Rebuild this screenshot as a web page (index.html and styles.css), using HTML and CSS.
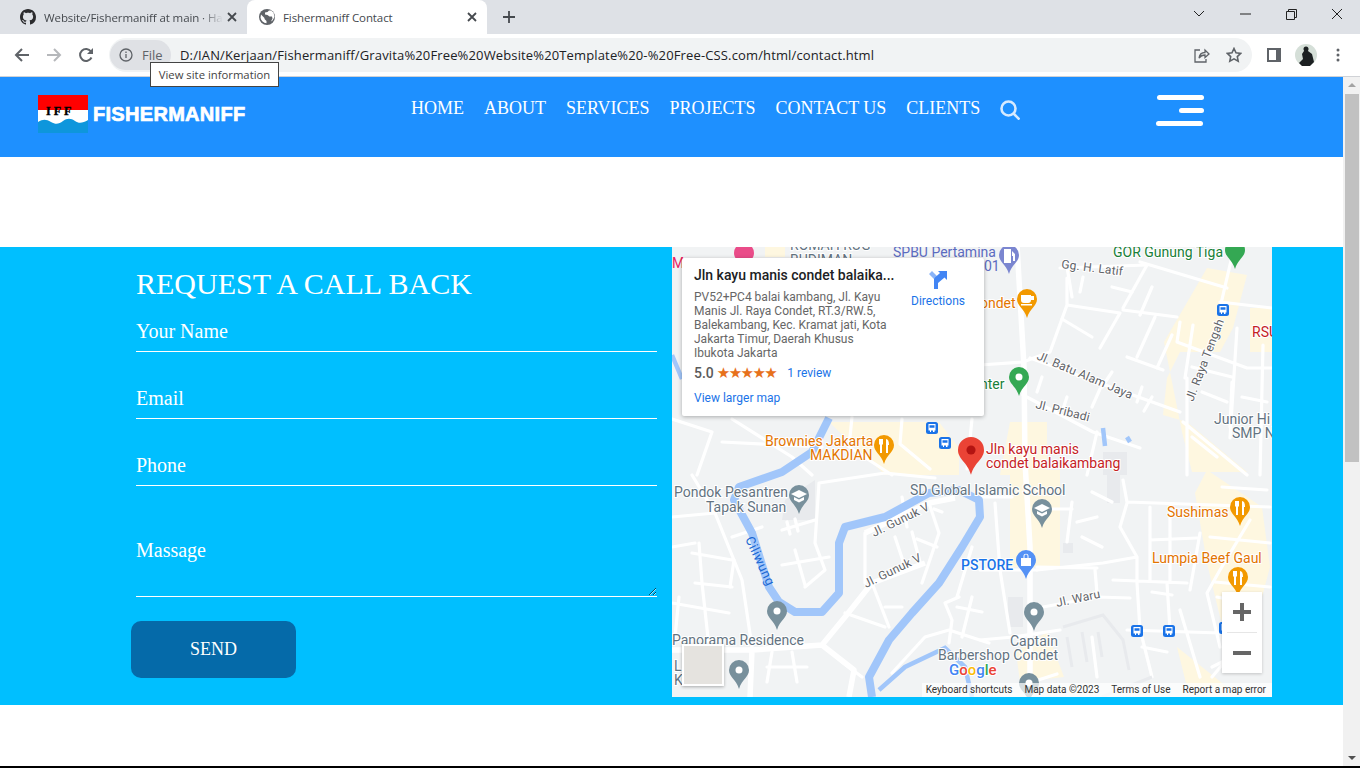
FILE: index.html
```html
<!DOCTYPE html>
<html lang="en">
<head>
    <meta charset="UTF-8">
    <meta name="viewport" content="width=device-width, initial-scale=1.0">
    <title>Fishermaniff Contact</title>
    <link rel="stylesheet" href="styles.css">
</head>
<body>
<div class="window">
    <!-- browser chrome -->
    <div class="tabstrip">
        <div class="tab">
            <svg class="tab-icon" viewBox="0 0 16 16"><path class="fill-dark" d="M8 0C3.58 0 0 3.58 0 8c0 3.54 2.29 6.53 5.47 7.59.4.07.55-.17.55-.38 0-.19-.01-.82-.01-1.49-2.01.37-2.53-.49-2.69-.94-.09-.23-.48-.94-.82-1.13-.28-.15-.68-.52-.01-.53.63-.01 1.08.58 1.23.82.72 1.21 1.87.87 2.33.66.07-.52.28-.87.51-1.07-1.78-.2-3.64-.89-3.64-3.95 0-.87.31-1.59.82-2.15-.08-.2-.36-1.02.08-2.12 0 0 .67-.21 2.2.82.64-.18 1.32-.27 2-.27.68 0 1.36.09 2 .27 1.53-1.04 2.2-.82 2.2-.82.44 1.1.16 1.92.08 2.12.51.56.82 1.27.82 2.15 0 3.07-1.87 3.75-3.65 3.95.29.25.54.73.54 1.48 0 1.07-.01 1.93-.01 2.2 0 .21.15.46.55.38A8.013 8.013 0 0016 8c0-4.42-3.58-8-8-8z"/></svg>
            <span class="tab-title tab-title-fade">Website/Fishermaniff at main · Ha</span>
            <svg class="tab-close" viewBox="0 0 10 10"><path class="line-dark" d="M1 1l8 8M9 1l-8 8"/></svg>
        </div>
        <div class="tab tab-active">
            <svg class="tab-icon" viewBox="0 0 16 16"><circle class="fill-gray" cx="8" cy="8" r="8"/><path class="fill-white" d="M2 5.500l3.500 3.500v1l2 2v2.300C4.500 14 2 11.500 1.500 8.500zM10 1.500l-1.500 1.500-2.500.500 0 2 2.500.500 2 1.500 2.500 0 .500 2-1.500 3 1.500-1 2-3.500-1-4.500-2.500-2z"/></svg>
            <span class="tab-title">Fishermaniff Contact</span>
            <svg class="tab-close" viewBox="0 0 10 10"><path class="line-dark" d="M1 1l8 8M9 1l-8 8"/></svg>
        </div>
        <svg class="new-tab" viewBox="0 0 12 12"><path class="line-dark" d="M6 0v12M0 6h12"/></svg>
        <div class="window-controls">
            <div class="window-btn"><svg width="12" height="8" viewBox="0 0 12 8"><path class="line-thin" d="M1 1l5 5 5-5"/></svg></div>
            <div class="window-btn"><svg width="11" height="2" viewBox="0 0 11 2"><path class="line-thin" d="M0 1h11"/></svg></div>
            <div class="window-btn"><svg width="11" height="11" viewBox="0 0 11 11"><path class="line-thin" d="M.5 2.500h8v8h-8zM2.500 2.500v-2h8v8h-2"/></svg></div>
            <div class="window-btn"><svg width="12" height="12" viewBox="0 0 12 12"><path class="line-thin" d="M1 1l10 10M11 1L1 11"/></svg></div>
        </div>
    </div>
    <div class="toolbar">
        <div class="tool-btn"><svg width="16" height="16" viewBox="0 0 16 16"><path class="line-icon" d="M15 8H2M8 2L2 8l6 6"/></svg></div>
        <div class="tool-btn"><svg width="16" height="16" viewBox="0 0 16 16"><path class="line-icon line-off" d="M1 8h13M8 2l6 6-6 6"/></svg></div>
        <div class="tool-btn"><svg width="16" height="16" viewBox="0 0 16 16"><path class="line-icon" d="M13.500 10.500A6 6 0 1 1 13 4.500"/><path class="fill-gray" d="M15 1v6H9z"/></svg></div>
        <div class="omnibox">
            <div class="site-chip">
                <svg width="14" height="14" viewBox="0 0 14 14"><circle class="line-chip" cx="7" cy="7" r="6"/><path class="line-chip" d="M7 6v4M7 3.500v1.500"/></svg>
                <span>File</span>
            </div>
            <span class="url">D:/IAN/Kerjaan/Fishermaniff/Gravita%20Free%20Website%20Template%20-%20Free-CSS.com/html/contact.html</span>
            <svg class="omni-icon share-icon" width="16" height="16" viewBox="0 0 16 16"><path class="line-chip" d="M5 11c.5-3.500 3-5.500 6-5.500V3l4 4-4 3.500V8C8.500 8 6.500 9 5 11zM6 3H1v12h11v-3"/></svg>
            <svg class="omni-icon" width="16" height="16" viewBox="0 0 16 16"><path class="line-star" d="M8 1.500l2 4.300 4.700.6-3.400 3.200.9 4.600L8 11.900l-4.200 2.300.9-4.600L1.300 6.400 6 5.800z"/></svg>
        </div>
        <div class="tool-group">
            <div class="tool-btn"><svg width="14" height="14" viewBox="0 0 14 14"><path class="fill-gray" d="M0 0h14v14H0zM2 2v10h7V2z"/></svg></div>
            <div class="tool-btn"><svg width="22" height="22" viewBox="0 0 22 22"><circle class="avatar-bg" cx="11" cy="11" r="11"/><circle class="avatar-fig" cx="11" cy="5" r="2.500"/><path class="avatar-fig" d="M9 7h4l4 3 2 8-4 4H7l-3-3 4-4-1-5z"/></svg></div>
            <div class="tool-btn"><svg width="4" height="14" viewBox="0 0 4 14"><circle class="fill-gray" cx="2" cy="2" r="1.500"/><circle class="fill-gray" cx="2" cy="7" r="1.500"/><circle class="fill-gray" cx="2" cy="12" r="1.500"/></svg></div>
        </div>
        <div class="tooltip">View site information</div>
    </div>

    <div class="viewport">
        <div class="page">
            <header class="site-header">
                <div class="brand">
                    <svg class="brand-logo" viewBox="0 0 50 38">
                        <rect class="logo-white" width="50" height="38"/>
                        <rect class="logo-red" width="50" height="15"/>
                        <path class="logo-blue" d="M0 27c5-3 8-3 13 0s8 2 12-1 8-3 12 0 8 2 13-1v13H0z"/>
                        <text class="logo-text" x="8" y="20">IFF</text>
                    </svg>
                    <span class="brand-name">FISHERMANIFF</span>
                </div>
                <nav class="main-nav">
                    <a>HOME</a>
                    <a>ABOUT</a>
                    <a>SERVICES</a>
                    <a>PROJECTS</a>
                    <a>CONTACT US</a>
                    <a>CLIENTS</a>
                </nav>
                <svg class="search-icon" viewBox="0 0 20 20"><circle class="line-search" cx="8.500" cy="8.500" r="7"/><path class="line-search" d="M13.500 13.500L19.500 19.500"/></svg>
                <div class="menu-toggle">
                    <span class="bar bar-top"></span>
                    <span class="bar bar-mid"></span>
                    <span class="bar bar-bot"></span>
                </div>
            </header>

            <section class="contact">
                <form class="contact-form">
                    <h2>REQUEST A CALL BACK</h2>
                    <input type="text" placeholder="Your Name">
                    <input type="text" placeholder="Email">
                    <input type="text" placeholder="Phone">
                    <textarea placeholder="Massage"></textarea>
                    <button type="button">SEND</button>
                </form>

                <div class="map">
                    <svg class="map-canvas" viewBox="0 0 600 450">
                        <defs>
                            <path id="pin" d="M0 0a10 10 0 0 1 10 10c0 7-7 9-10 19-3-10-10-12-10-19A10 10 0 0 1 0 0z"/>
                            <circle id="g-dot" class="glyph" cx="0" cy="10" r="3.500"/>
                            <path id="g-food" class="glyph" d="M-5 4h4v5l-1 1v8h-2v-8l-1-1zM2 4c2 0 3 2 3 6H4v8H2z"/>
                            <path id="g-edu" class="glyph" d="M0 5l8 4-8 4-8-4zM-5 12l5 2.500 5-2.500v3l-5 2.500-5-2.500z"/>
                            <path id="g-cup" class="glyph" d="M-6 6h10v5c0 2-1 3-3 3h-4c-2 0-3-1-3-3zM4 7h3v4H4zM-6 15H5v1.500H-6z"/>
                            <path id="g-bag" class="glyph" d="M-5 8h10v8H-5zM-2.500 8V6c0-3 5-3 5 0v2h-1V6c0-2-3-2-3 0v2z"/>
                            <path id="g-pump" class="glyph" d="M-5 4h7v14h-7zM3 6l3 3v7H4v-5H3z"/>
                            <g id="bus">
                                <rect x="-6" y="-6" width="12" height="12" rx="2.500" class="bus-bg"/>
                                <path class="glyph" d="M-3.500-4h7v6.500h-1V4h-1.500V2.500h-2V4H-2V2.500h-1.500zM-2.500-2.800v2.500h5v-2.500z"/>
                            </g>
                        </defs>

                        <rect class="map-land" width="600" height="450"/>

                        <g class="map-beige">
                            <path d="M535 21l40 7-14 53-13 24h-40l-13 26-4 37 24 7 60 50h-55l-10-40-18-90z"/>
                            <path d="M578 61h22v44h-22zM338 223h50v97h-50zM338 175h37v53h-47zM157 175h110l20 26v27h-74zM535 223l55 37 8 60-8 30-30 50-12-30-13-54-12-70zM375 385l17 45-44 5-4-30zM505 400l50 40h-40zM93 0h20v10H93z"/>
                        </g>
                        <g class="map-building">
                            <path d="M435 223h13v33h-13zM391 296h10v10h-10zM336 350h15v30h-15zM431 205h24v23h-24zM113 253l30-20v40h-33z"/>
                        </g>

                        <g class="map-road">
                            <path d="M395 31v27l-17 47-27 10M395 58l53 8-20 35M468 15l87 26M475 18l-24 43M451 63l54 7M483 70l-18 40M455 110l36 13M500 88l-15 33"/>
                            <path d="M561 5l-13 56M548 55l52 6M508 75l-3 20 70 26h25M358 111l150 54M515 131v97M521 78l-8 53M511 175l64 53M565 81l-7 110M591 98l-3 130"/>
                            <path d="M351 148l70 37 47 16M425 185l-10 43M308 118l43-3M388 21l87-3M400 50l-5-30M408 45l3-15M480 40l-12 28"/>
                            <path d="M0 172l40 13-15 43M180 170l-3 30 43 28M50 195l100 5M60 172l60 38 20 18M230 172l-2 25 30 25M300 172l-5 50"/>
                            <path d="M43 266l27 67 10 67M0 356l57 10M20 306l40 7M23 336l37 4M27 296l3 40 7 64M7 350l-4 40M20 228l23 38M0 270l43-4"/>
                            <path d="M147 236l-4 60 10 27-20 17M123 303l10 35M110 318l47-8M147 236l66-10 50 5M110 283l33-10M115 275l3 12M123 272l3 12"/>
                            <path d="M200 336l17 44M173 366l40 14M213 360h17M287 350l-14 6 7 17-3 23M220 426l33-36 24-7 40 13M257 256l10 30-17 50M193 286v50"/>
                            <path d="M451 233l4 22 143 5M455 256l-7 24 17 30-34 6-66 7M465 310v26l3 47M495 336l3 47M441 333l74 3M478 260v73M498 263v70M478 293l47-2M528 286l-10 57"/>
                            <path d="M455 383l93 3M508 363l20 67M538 290l60 6M578 273l-30 50-13 23 13 54M371 360l54-10 33 1M308 393l33-3 47-7M323 256l5 67 10 63M365 320l60 1M423 323l2 23"/>
                            <path d="M543 335l55 5M400 262h-20M410 290l20 10M440 255l-20-10M550 240l45 3M480 430l-10-40M540 420l30-15"/>
                            <path d="M308 323h57M300 250h40M300 300l-15 50"/>
                            <path d="M0 300l23-4M60 290l30-10M62 313l-4 27M85 300l10 35M100 405l-5 30M120 405l5 30M95 420h40M190 430l-20-15M230 250l5 30M240 262l-20 10"/>
                            <path d="M223 290l10 30M240 285l8 30M262 262l8 3M265 300l-20-8M300 350l-10 40M310 365l-25-5M520 120l40 10M530 145l25 10M570 150l25 5M520 190l25 20M560 135l-2 45"/>
                            <path d="M440 40l20 5M420 90l-30-18M440 125l-10 15M470 140l-5 15M370 130l-5 15M395 150l-4 12M420 160l8-18M480 150l-8 14"/>
                            <path d="M400 255l-5 40M425 270l-20 5M545 350l25 5M480 345l20 3M420 390l5 40M470 400l25 5M360 435l25-8M565 400l-25 30"/>
                        </g>
                        <path class="map-main-road" d="M345-2l7 122 1 95 5 85v150"/>
                        <path class="map-main-road" d="M0 403h80l70-5 23-28 27-34 53-20M150 398l32 25-5 27M80 403l-2 47M193 286l64-30 26-5"/>

                        <g class="map-faint">
                            <path d="M391 380l40-12 20 25 6 30M400 420l-5-30M415 415l-5-30M430 410l-4-25"/>
                            <path d="M430 450l50-20"/>
                        </g>

                        <path class="map-river" d="M157 171l-17 34-30 20-43 15-5 13 18 33 17 54 10 15 16 10h27l17-19v-50l6-16 40-10 44-24 30-3 20 10 1 17-18 30-23 36-27 30-23 27-20 37 3 20"/>
                        <path class="map-river-thin" d="M0 108l10 24M207 443l26-23 40-19 20 19 7 30"/>
                        <path class="map-river-thin" d="M431 181l2 18M455 190l3 5"/>

                        <g class="label-gray">
                            <text x="2" y="250">Pondok Pesantren</text>
                            <text x="34" y="265">Tapak Sunan</text>
                            <text x="0" y="398">Panorama Residence</text>
                            <text x="238" y="248">SD Global Islamic School</text>
                            <text x="542" y="177">Junior Hi</text>
                            <text x="560" y="191">SMP N</text>
                            <text x="338" y="399">Captain</text>
                            <text x="266" y="413">Barbershop Condet</text>
                            <text x="2" y="424">L</text>
                            <text x="2" y="438">K</text>
                            <text x="118" y="3">ROMAH RUG</text>
                            <text x="118" y="18">BUDIMAN</text>
                        </g>
                        <g class="label-orange">
                            <text x="93" y="199">Brownies Jakarta</text>
                            <text x="138" y="213">MAKDIAN</text>
                            <text x="495" y="270">Sushimas</text>
                            <text x="480" y="316">Lumpia Beef Gaul</text>
                            <text x="308" y="61">ondet</text>
                        </g>
                        <text class="label-green" x="308" y="142">nter</text>
                        <text class="label-green" x="441" y="10">GOR Gunung Tiga</text>
                        <text class="label-purple" x="221" y="10">SPBU Pertamina</text>
                        <text class="label-purple" x="312" y="24">01</text>
                        <text class="label-pink" x="0" y="21">M</text>
                        <g class="label-red">
                            <text x="314" y="207">Jln kayu manis</text>
                            <text x="314" y="221">condet balaikambang</text>
                            <text x="580" y="90">RSU</text>
                        </g>
                        <text class="label-blue" x="289" y="323">PSTORE</text>

                        <g class="label-road">
                            <text transform="translate(364 112) rotate(23)">Jl. Batu Alam Jaya</text>
                            <text transform="translate(521 155) rotate(-69)">Jl. Raya Tengah</text>
                            <text transform="translate(363 161) rotate(14)">Jl. Pribadi</text>
                            <text transform="translate(389 21) rotate(7)">Gg. H. Latif</text>
                            <text transform="translate(202 290) rotate(-26)">Jl. Gunuk V</text>
                            <text transform="translate(194 341) rotate(-26)">Jl. Gunuk V</text>
                            <text transform="translate(385 360) rotate(-12)">Jl. Waru</text>
                        </g>
                        <text class="label-river" transform="translate(73 292) rotate(65)">Ciliwung</text>

                        <g transform="translate(72 -4)" class="pin-pink"><use href="#pin"/></g>
                        <g transform="translate(337 -2)" class="pin-purple"><use href="#pin"/><use href="#g-pump"/></g>
                        <g transform="translate(563 -7)" class="pin-green"><use href="#pin"/></g>
                        <g transform="translate(355 42)" class="pin-orange"><use href="#pin"/><use href="#g-cup"/></g>
                        <g transform="translate(347 120)" class="pin-green"><use href="#pin"/><use href="#g-dot"/></g>
                        <g transform="translate(212 188)" class="pin-orange"><use href="#pin"/><use href="#g-food"/></g>
                        <g transform="translate(127 238)" class="pin-gray"><use href="#pin"/><use href="#g-edu"/></g>
                        <g transform="translate(105 354)" class="pin-gray"><use href="#pin"/><use href="#g-dot"/></g>
                        <g transform="translate(67 413)" class="pin-gray"><use href="#pin"/><use href="#g-dot"/></g>
                        <g transform="translate(370 252)" class="pin-gray"><use href="#pin"/><use href="#g-edu"/></g>
                        <g transform="translate(568 250)" class="pin-orange"><use href="#pin"/><use href="#g-food"/></g>
                        <g transform="translate(566 320)" class="pin-orange"><use href="#pin"/><use href="#g-food"/></g>
                        <g transform="translate(354 303)" class="pin-blue"><use href="#pin"/><use href="#g-bag"/></g>
                        <g transform="translate(362 355)" class="pin-gray"><use href="#pin"/><use href="#g-dot"/></g>
                        <g transform="translate(357 426)" class="pin-gray"><use href="#pin"/><use href="#g-dot"/></g>

                        <use href="#bus" x="551" y="63"/>
                        <use href="#bus" x="260" y="181"/>
                        <use href="#bus" x="273" y="196"/>
                        <use href="#bus" x="465" y="384"/>
                        <use href="#bus" x="497" y="384"/>
                        <use href="#bus" x="553" y="381"/>

                        <g transform="translate(299 190) scale(1.300)" class="pin-red"><use href="#pin"/><circle class="pin-red-dot" cx="0" cy="10" r="3.500"/></g>

                        <text class="google-logo" x="277" y="428"><tspan class="g-blue">G</tspan><tspan class="g-red">o</tspan><tspan class="g-yellow">o</tspan><tspan class="g-blue">g</tspan><tspan class="g-green">l</tspan><tspan class="g-red">e</tspan></text>
                    </svg>

                    <div class="place-card">
                        <div class="place-info">
                            <div class="place-title">Jln kayu manis condet balaika...</div>
                            <div class="place-address">PV52+PC4 balai kambang, Jl. Kayu Manis Jl. Raya Condet, RT.3/RW.5, Balekambang, Kec. Kramat jati, Kota Jakarta Timur, Daerah Khusus Ibukota Jakarta</div>
                            <div class="place-rating">
                                <span class="rating-num">5.0</span>
                                <span class="rating-stars">★★★★★</span>
                                <a class="rating-link">1 review</a>
                            </div>
                            <a class="larger-map">View larger map</a>
                        </div>
                        <div class="place-directions">
                            <svg width="18" height="18" viewBox="0 0 18 18">
                                <path class="dir-light" d="M0 3l3-3 6 6v12H5V8z"/>
                                <path class="dir-dark" d="M5 18V9c0-1 .5-2 1-2.500L11 2 9 0h9v9l-2.500-2.500L9 12v6z"/>
                            </svg>
                            <a>Directions</a>
                        </div>
                    </div>

                    <div class="map-type"></div>

                    <div class="zoom-control">
                        <div class="zoom-btn"><svg width="18" height="18" viewBox="0 0 18 18"><path class="fill-zoom" d="M7 0h4v7h7v4h-7v7H7v-7H0V7h7z"/></svg></div>
                        <div class="zoom-divider"></div>
                        <div class="zoom-btn"><svg width="18" height="4" viewBox="0 0 18 4"><path class="fill-zoom" d="M0 0h18v4H0z"/></svg></div>
                    </div>

                    <div class="map-footer">
                        <span>Keyboard shortcuts</span>
                        <span>Map data ©2023</span>
                        <span>Terms of Use</span>
                        <span>Report a map error</span>
                    </div>
                </div>
            </section>
        </div>

        <div class="scrollbar">
            <div class="scroll-arrow scroll-up"></div>
            <div class="scroll-thumb"></div>
            <div class="scroll-arrow scroll-down"></div>
        </div>
    </div>
</div>
</body>
</html>
```

FILE: styles.css
```css
* {
    box-sizing: border-box;
}
body {
    margin: 0;
    padding: 0;
    background-color: #fff;
    font-family: 'Open Sans', 'Noto Sans', sans-serif;
    overflow: hidden;
}
.window {
    width: 1360px;
    height: 768px;
    display: flex;
    flex-direction: column;
}

/* browser chrome */
.tabstrip {
    height: 34px;
    background-color: #dee1e6;
    display: flex;
    align-items: stretch;
    padding-left: 8px;
}
.tab {
    width: 239px;
    display: flex;
    align-items: center;
    padding: 0 10px 0 12px;
}
.tab-active {
    width: 240px;
    background-color: #fff;
    border-radius: 8px 8px 0 0;
}
.tab-icon {
    width: 16px;
    height: 16px;
    flex: none;
    margin-right: 8px;
}
.tab-title {
    font-size: 11.500px;
    letter-spacing: -0.100px;
    color: #45494e;
    flex: 1;
    white-space: nowrap;
}
.tab-title-fade {
    -webkit-mask-image: linear-gradient(to right, #000 88%, transparent 100%);
    mask-image: linear-gradient(to right, #000 88%, transparent 100%);
}
.tab-close {
    width: 10px;
    height: 10px;
    flex: none;
    margin-left: 4px;
}
.new-tab {
    width: 12px;
    height: 12px;
    align-self: center;
    margin-left: 16px;
}
.window-controls {
    margin-left: auto;
    display: flex;
    height: 28px;
}
.window-btn {
    width: 46px;
    display: flex;
    align-items: center;
    justify-content: center;
}
.line-dark {
    stroke: #45494e;
    stroke-width: 1.800;
    fill: none;
}
.line-thin {
    stroke: #222;
    stroke-width: 1;
    fill: none;
}
.fill-dark {
    fill: #2b2b2e;
}
.fill-gray {
    fill: #5f6368;
}
.fill-white {
    fill: #fff;
}
.toolbar {
    height: 43px;
    background-color: #fff;
    border-bottom: 1px solid #d0d2d6;
    display: flex;
    align-items: center;
    padding: 0 6px 0 6px;
    position: relative;
}
.tool-btn {
    width: 32px;
    height: 32px;
    display: flex;
    align-items: center;
    justify-content: center;
}
.line-icon {
    stroke: #5f6368;
    stroke-width: 2;
    fill: none;
}
.line-off {
    stroke: #b6b8bb;
}
.line-chip {
    stroke: #5f6368;
    stroke-width: 1.300;
    fill: none;
}
.line-star {
    stroke: #5f6368;
    stroke-width: 1.600;
    fill: none;
}
.omnibox {
    margin-left: 7px;
    width: 1143px;
    height: 34px;
    border-radius: 17px;
    background-color: #f1f3f4;
    display: flex;
    align-items: center;
    padding-left: 1px;
}
.site-chip {
    width: 61px;
    height: 30px;
    border-radius: 15px;
    background-color: #dfe1e5;
    display: flex;
    align-items: center;
    padding-left: 9px;
    gap: 9px;
    font-size: 13px;
    color: #5f6368;
}
.url {
    margin-left: 9px;
    font-size: 13px;
    letter-spacing: 0.140px;
    color: #202124;
    white-space: nowrap;
}
.omni-icon {
    flex: none;
    margin-left: 16px;
}
.share-icon {
    margin-left: auto;
}
.omni-icon:last-child {
    margin-right: 10px;
}
.tool-group {
    display: flex;
    margin-left: 6px;
}
.avatar-bg {
    fill: #d5dfd8;
}
.avatar-fig {
    fill: #1c2022;
}
.tooltip {
    position: absolute;
    left: 150px;
    top: 28px;
    width: 129px;
    height: 25px;
    background-color: #fff;
    border: 1px solid #444;
    font-size: 11.300px;
    color: #444;
    display: flex;
    align-items: center;
    justify-content: center;
    z-index: 5;
}

/* page */
.viewport {
    height: 691px;
    display: flex;
    border-bottom: 2px solid #000;
    overflow: hidden;
}
.page {
    width: 1343px;
    background-color: #fff;
    font-family: 'Liberation Serif', serif;
}
.site-header {
    height: 80px;
    background-color: #1e90ff;
    display: flex;
    align-items: flex-start;
    padding: 18px 139px 0 38px;
}
.brand {
    width: 373px;
    display: flex;
    align-items: center;
    gap: 5px;
}
.brand-logo {
    width: 50px;
    height: 38px;
    flex: none;
}
.logo-white {
    fill: #fff;
}
.logo-red {
    fill: #f00;
}
.logo-blue {
    fill: #0e96dc;
}
.logo-text {
    font-family: 'Liberation Serif', serif;
    font-weight: bold;
    font-size: 12px;
    letter-spacing: 3px;
    fill: #000;
    stroke: #000;
    stroke-width: 0.400px;
}
.brand-name {
    font-family: 'Liberation Sans', sans-serif;
    font-weight: bold;
    font-size: 20px;
    letter-spacing: 0.300px;
    color: #fff;
    -webkit-text-stroke: 0.700px #fff;
}
.main-nav {
    display: flex;
    gap: 20px;
    margin-top: 3px;
}
.main-nav a {
    font-size: 18px;
    color: #fff;
}
.search-icon {
    width: 20px;
    height: 20px;
    margin: 5px 0 0 20px;
}
.line-search {
    stroke: #d6eaff;
    stroke-width: 2.600;
    fill: none;
}
.menu-toggle {
    margin-left: auto;
    width: 48px;
    display: flex;
    flex-direction: column;
    align-items: flex-end;
    gap: 8px;
}
.bar {
    display: block;
    height: 5px;
    background-color: #fff;
    border-radius: 3px;
}
.bar-top {
    width: 47px;
}
.bar-mid {
    width: 25px;
}
.bar-bot {
    width: 47px;
    margin-right: 1px;
}

/* contact section */
.contact {
    margin-top: 90px;
    height: 458px;
    background-color: #00bfff;
    display: flex;
    align-items: flex-start;
}
.contact-form {
    width: 657px;
    padding: 20px 0 0 136px;
    display: flex;
    flex-direction: column;
    align-items: flex-start;
}
.contact-form h2 {
    margin: 0 0 11px;
    font-size: 30px;
    font-weight: normal;
    color: #fff;
}
.contact-form input,
.contact-form textarea {
    display: block;
    width: 521px;
    padding: 0;
    border: none;
    border-bottom: 1px solid #fff;
    border-radius: 0;
    background: transparent;
    font-family: 'Liberation Serif', serif;
    font-size: 20px;
    color: #fff;
    outline: none;
}
.contact-form input {
    height: 40px;
    margin-bottom: 27px;
}
.contact-form textarea {
    height: 58px;
    margin-top: 26px;
}
.contact-form input::placeholder,
.contact-form textarea::placeholder {
    color: #fff;
    opacity: 1;
}
.contact-form button {
    width: 165px;
    height: 57px;
    margin: 24px 0 0 -5px;
    border: none;
    border-radius: 10px;
    background-color: #056aa9;
    color: #fff;
    font-family: 'Liberation Serif', serif;
    font-size: 18px;
}

/* map */
.map {
    margin-left: 15px;
    width: 600px;
    height: 450px;
    position: relative;
    overflow: hidden;
    font-family: 'Roboto', sans-serif;
}
.map-canvas {
    display: block;
    width: 600px;
    height: 450px;
}
.map-canvas text {
    font-family: 'Roboto', sans-serif;
    font-size: 14px;
}
.map-land {
    fill: #f1f3f4;
}
.map-beige {
    fill: #fef7e0;
}
.map-building {
    fill: #e8eaed;
}
.map-road {
    fill: none;
    stroke: #fff;
    stroke-width: 3.200;
    stroke-linecap: round;
    stroke-linejoin: round;
}
.map-main-road {
    fill: none;
    stroke: #fff;
    stroke-width: 5.500;
    stroke-linejoin: round;
}
.map-faint {
    fill: none;
    stroke: #e8eaed;
    stroke-width: 3;
}
.map-river {
    fill: none;
    stroke: #a1c6fa;
    stroke-width: 8;
    stroke-linejoin: round;
}
.map-river-thin {
    fill: none;
    stroke: #a1c6fa;
    stroke-width: 4.500;
}
.label-gray text,
text.label-gray {
    fill: #637381;
    paint-order: stroke;
    stroke: #fff;
    stroke-width: 2px;
}
.label-orange text {
    fill: #e37400;
    paint-order: stroke;
    stroke: #fff;
    stroke-width: 2px;
}
.label-green {
    fill: #188038;
    paint-order: stroke;
    stroke: #fff;
    stroke-width: 2px;
}
.label-purple {
    fill: #5c6bc0;
}
.label-pink {
    fill: #e91e63;
}
.label-red text {
    fill: #c5221f;
    paint-order: stroke;
    stroke: #fff;
    stroke-width: 2px;
}
.map-canvas .label-blue {
    fill: #1a73e8;
    font-weight: 500;
    paint-order: stroke;
    stroke: #fff;
    stroke-width: 2px;
}
.map-canvas .label-road text {
    font-size: 12px;
    letter-spacing: 0.200px;
    fill: #5f6368;
    paint-order: stroke;
    stroke: #fff;
    stroke-width: 2px;
}
.map-canvas .label-river {
    font-size: 13px;
    letter-spacing: 0.400px;
    fill: #1967d2;
}
.glyph {
    fill: #fff;
}
.bus-bg {
    fill: #1a73e8;
}
.pin-orange {
    fill: #f29900;
}
.pin-green {
    fill: #34a853;
}
.pin-gray {
    fill: #78909c;
}
.pin-blue {
    fill: #5491f5;
}
.pin-purple {
    fill: #7b86d0;
}
.pin-pink {
    fill: #ea4c89;
}
.pin-red {
    fill: #ea4335;
}
.pin-red-dot {
    fill: #b31412;
}
.map-canvas .google-logo {
    font-size: 15px;
    font-weight: 500;
    paint-order: stroke;
    stroke: #fff;
    stroke-width: 2px;
}
.g-blue {
    fill: #4285f4;
}
.g-red {
    fill: #ea4335;
}
.g-yellow {
    fill: #fbbc05;
}
.g-green {
    fill: #34a853;
}
.place-card {
    position: absolute;
    left: 10px;
    top: 11px;
    width: 302px;
    height: 158px;
    background-color: #fff;
    border-radius: 2px;
    box-shadow: 0 1px 4px rgba(0, 0, 0, 0.3);
    padding: 9px 12px;
    display: flex;
}
.place-info {
    width: 199px;
    flex: none;
}
.place-title {
    font-size: 14px;
    font-weight: 500;
    color: #202124;
    line-height: 16px;
    white-space: nowrap;
}
.place-address {
    margin-top: 7px;
    font-size: 12px;
    line-height: 14px;
    color: #666;
}
.place-rating {
    display: flex;
    align-items: center;
    margin-top: 5px;
    height: 16px;
}
.rating-num {
    font-size: 14px;
    font-weight: 500;
    color: #5b5b5b;
    margin-right: 3px;
}
.rating-stars {
    font-family: 'DejaVu Sans', sans-serif;
    font-size: 15px;
    letter-spacing: -1.570px;
    color: #e7711b;
}
.rating-link {
    margin-left: 11px;
    font-size: 12px;
    color: #1a73e8;
}
.larger-map {
    display: block;
    margin-top: 10px;
    font-size: 12px;
    color: #1a73e8;
}
.place-directions {
    margin-left: 15px;
    width: 60px;
    display: flex;
    flex-direction: column;
    align-items: center;
    gap: 5px;
    padding-top: 4px;
    font-size: 12px;
    color: #1a73e8;
}
.dir-light {
    fill: #8ab4f8;
}
.dir-dark {
    fill: #4285f4;
}
.map-type {
    position: absolute;
    left: 10px;
    top: 397px;
    width: 42px;
    height: 42px;
    background-color: #e5e3df;
    border: 2px solid #fff;
    box-shadow: 0 1px 3px rgba(0, 0, 0, 0.3);
}
.zoom-control {
    position: absolute;
    left: 550px;
    top: 345px;
    width: 40px;
    height: 81px;
    background-color: #fff;
    box-shadow: 0 1px 3px rgba(0, 0, 0, 0.2);
    display: flex;
    flex-direction: column;
    align-items: center;
}
.zoom-btn {
    flex: 1;
    display: flex;
    align-items: center;
    justify-content: center;
}
.zoom-divider {
    width: 30px;
    height: 1px;
    background-color: #e6e6e6;
}
.fill-zoom {
    fill: #666;
}
.map-footer {
    position: absolute;
    right: 0;
    bottom: 0;
    height: 14px;
    display: flex;
    align-items: center;
    gap: 12px;
    padding: 0 6px 2px 4px;
    background-color: rgba(255, 255, 255, 0.7);
    font-size: 10px;
    color: #333;
    white-space: nowrap;
}

/* scrollbar */
.scrollbar {
    width: 17px;
    background-color: #f1f1f1;
    display: flex;
    flex-direction: column;
    align-items: center;
    padding-top: 6px;
}
.scroll-arrow {
    width: 0;
    height: 0;
    border-left: 4px solid transparent;
    border-right: 4px solid transparent;
}
.scroll-up {
    border-bottom: 4px solid #a3a3a3;
}
.scroll-thumb {
    width: 14px;
    height: 368px;
    margin-top: 7px;
    background-color: #c1c1c1;
}
.scroll-down {
    margin-top: auto;
    margin-bottom: 6px;
    border-top: 4px solid #505050;
}
```
